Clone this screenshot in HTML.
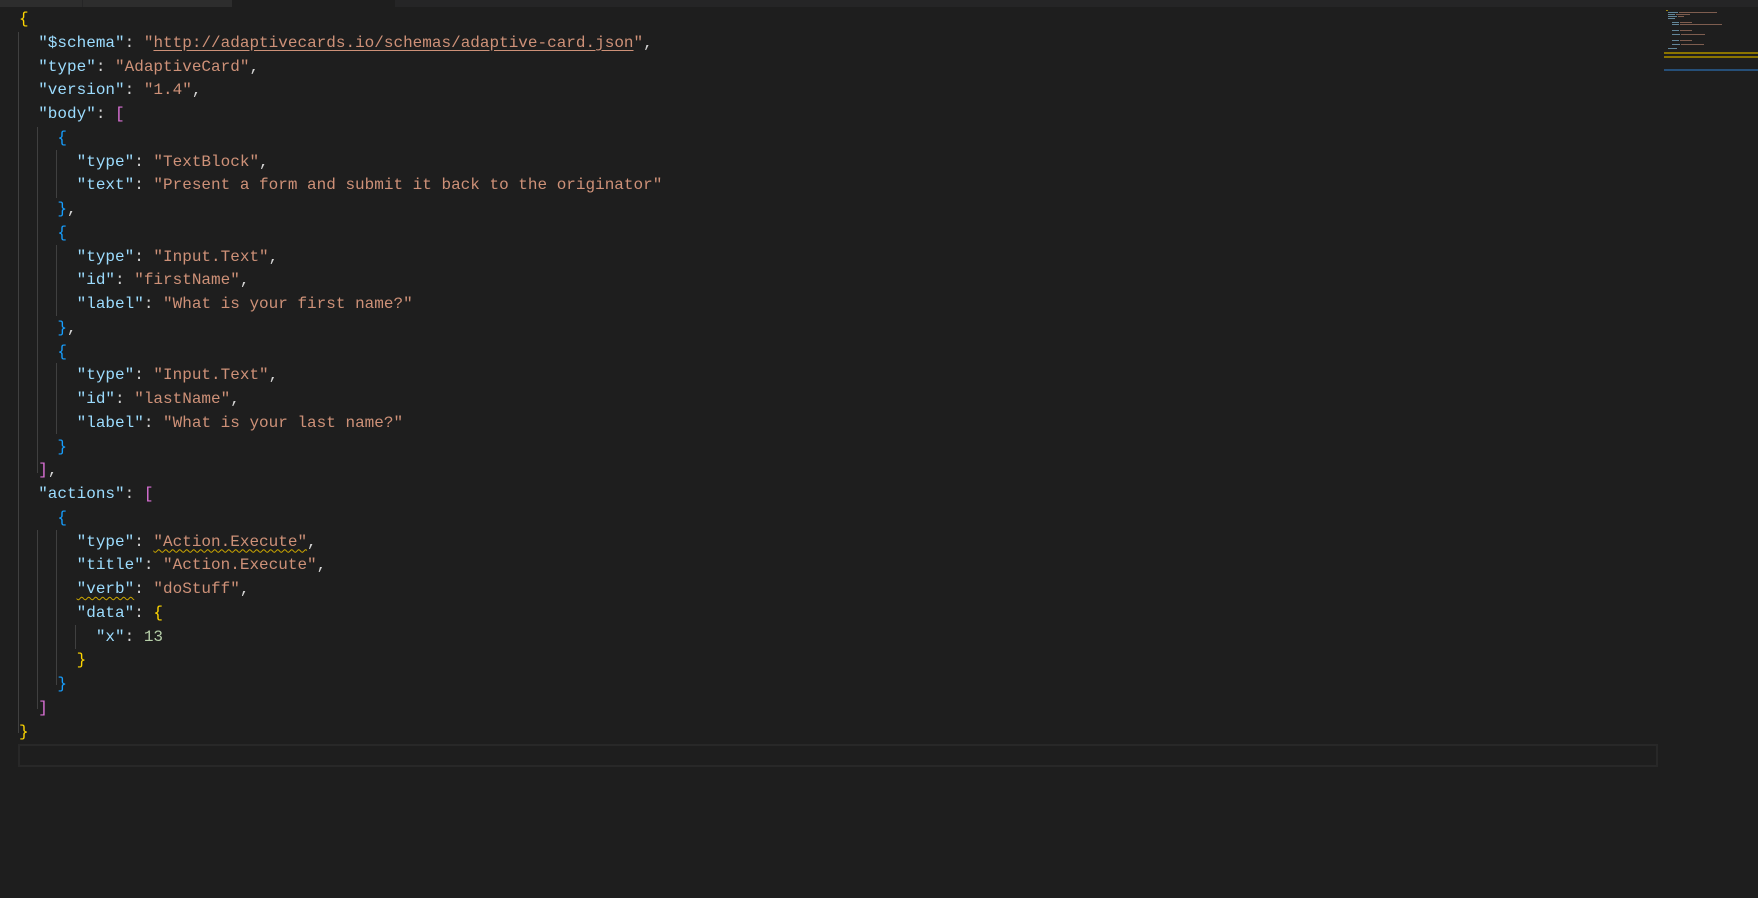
<!DOCTYPE html>
<html><head><meta charset="utf-8"><style>
html,body{margin:0;padding:0;background:#1e1e1e;width:1758px;height:898px;overflow:hidden;position:relative}
.tabs{position:absolute;left:0;top:0;width:1758px;height:7px;background:#252526}
.code{position:absolute;left:19px;top:8px;font-family:"Liberation Mono",monospace;font-size:16px;line-height:23.75px;color:#d4d4d4;white-space:pre}
.k{color:#9cdcfe}.s{color:#ce9178}.n{color:#b5cea8}
.b1{color:#ffd700}.b2{color:#da70d6}.b3{color:#179fff}
.u{text-decoration:underline;text-underline-offset:3px}
.w{text-decoration:underline wavy #cca700;text-decoration-thickness:1px;text-underline-offset:3px}
.g{position:absolute;width:1px;background:#404040}
.cur{position:absolute;left:18px;top:744px;width:1636px;height:19px;border:2px solid #282828}
.mm{position:absolute;height:1px}
</style></head><body>
<div class="tabs"><div style="position:absolute;left:0;width:82px;height:7px;background:#2d2d2d"></div><div style="position:absolute;left:83px;width:149px;height:7px;background:#2d2d2d"></div><div style="position:absolute;left:232px;width:163px;height:7px;background:#1e1e1e"></div></div>
<div class="g" style="left:18px;top:32px;height:701px"></div>
<div class="g" style="left:37px;top:127px;height:346px"></div>
<div class="g" style="left:37px;top:530px;height:179px"></div>
<div class="g" style="left:56px;top:150px;height:48px"></div>
<div class="g" style="left:56px;top:245px;height:71px"></div>
<div class="g" style="left:56px;top:363px;height:71px"></div>
<div class="g" style="left:56px;top:530px;height:155px"></div>
<div class="g" style="left:75px;top:625px;height:24px"></div>
<div class="cur"></div>
<div class="code"><span class="b1">{</span>
  <span class="k">"$schema"</span>: <span class="s">"<span class="u">http://adaptivecards.io/schemas/adaptive-card.json</span>"</span>,
  <span class="k">"type"</span>: <span class="s">"AdaptiveCard"</span>,
  <span class="k">"version"</span>: <span class="s">"1.4"</span>,
  <span class="k">"body"</span>: <span class="b2">[</span>
    <span class="b3">{</span>
      <span class="k">"type"</span>: <span class="s">"TextBlock"</span>,
      <span class="k">"text"</span>: <span class="s">"Present a form and submit it back to the originator"</span>
    <span class="b3">}</span>,
    <span class="b3">{</span>
      <span class="k">"type"</span>: <span class="s">"Input.Text"</span>,
      <span class="k">"id"</span>: <span class="s">"firstName"</span>,
      <span class="k">"label"</span>: <span class="s">"What is your first name?"</span>
    <span class="b3">}</span>,
    <span class="b3">{</span>
      <span class="k">"type"</span>: <span class="s">"Input.Text"</span>,
      <span class="k">"id"</span>: <span class="s">"lastName"</span>,
      <span class="k">"label"</span>: <span class="s">"What is your last name?"</span>
    <span class="b3">}</span>
  <span class="b2">]</span>,
  <span class="k">"actions"</span>: <span class="b2">[</span>
    <span class="b3">{</span>
      <span class="k">"type"</span>: <span class="s w">"Action.Execute"</span>,
      <span class="k">"title"</span>: <span class="s">"Action.Execute"</span>,
      <span class="k w">"verb"</span>: <span class="s">"doStuff"</span>,
      <span class="k">"data"</span>: <span class="b1">{</span>
        <span class="k">"x"</span>: <span class="n">13</span>
      <span class="b1">}</span>
    <span class="b3">}</span>
  <span class="b2">]</span>
<span class="b1">}</span>
</div>
<div style="position:absolute;left:1664px;top:9px;width:60px;height:55px;opacity:.55">
<div class="mm" style="left:2px;top:1px;width:2px;background:#ffd700"></div>
<div class="mm" style="left:4px;top:3px;width:10px;background:#9cdcfe"></div><div class="mm" style="left:15px;top:3px;width:38px;background:#ce9178"></div>
<div class="mm" style="left:4px;top:5px;width:7px;background:#9cdcfe"></div><div class="mm" style="left:12px;top:5px;width:14px;background:#ce9178"></div>
<div class="mm" style="left:4px;top:7px;width:9px;background:#9cdcfe"></div><div class="mm" style="left:14px;top:7px;width:6px;background:#ce9178"></div>
<div class="mm" style="left:4px;top:9px;width:7px;background:#9cdcfe"></div>
<div class="mm" style="left:8px;top:13px;width:7px;background:#9cdcfe"></div><div class="mm" style="left:16px;top:13px;width:12px;background:#ce9178"></div>
<div class="mm" style="left:8px;top:15px;width:7px;background:#9cdcfe"></div><div class="mm" style="left:16px;top:15px;width:42px;background:#ce9178"></div>
<div class="mm" style="left:8px;top:21px;width:7px;background:#9cdcfe"></div><div class="mm" style="left:16px;top:21px;width:12px;background:#ce9178"></div>
<div class="mm" style="left:8px;top:25px;width:8px;background:#9cdcfe"></div><div class="mm" style="left:17px;top:25px;width:24px;background:#ce9178"></div>
<div class="mm" style="left:8px;top:31px;width:7px;background:#9cdcfe"></div><div class="mm" style="left:16px;top:31px;width:12px;background:#ce9178"></div>
<div class="mm" style="left:8px;top:35px;width:8px;background:#9cdcfe"></div><div class="mm" style="left:17px;top:35px;width:23px;background:#ce9178"></div>
<div class="mm" style="left:4px;top:39px;width:9px;background:#9cdcfe"></div>
</div>
<div class="mm" style="left:1664px;top:52px;width:94px;height:2px;background:#8a7400"></div>
<div class="mm" style="left:1664px;top:56px;width:94px;height:2px;background:#8a7400"></div>
<div class="mm" style="left:1664px;top:69px;width:94px;height:2px;background:#264f78"></div>
</body></html>
